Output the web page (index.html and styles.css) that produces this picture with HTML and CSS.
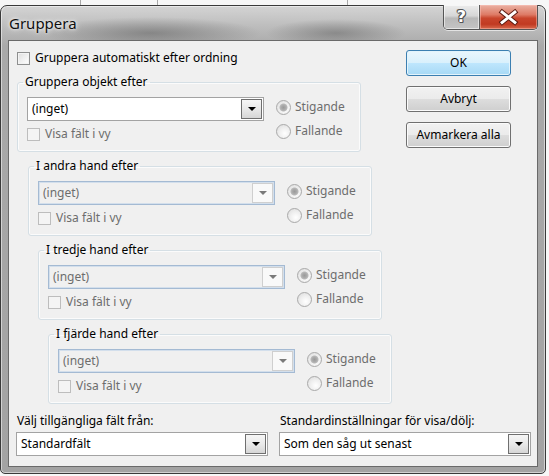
FILE: index.html
```html
<!DOCTYPE html>
<html lang="sv">
<head>
<meta charset="utf-8">
<title>Gruppera</title>
<link rel="stylesheet" href="styles.css">
</head>
<body>
<div class="window">
  <div class="titlebar">
    <span class="title">Gruppera</span>
    <div class="caption-buttons">
      <div class="cap-btn help"><span class="help-glyph">?</span></div>
      <div class="cap-btn close">
        <svg width="58" height="24" viewBox="0 0 58 24">
          <path d="M22.5 7 L35.5 17.5 M35.5 7 L22.5 17.5" stroke="#5b1a10" stroke-width="5" stroke-linecap="square" fill="none"/>
          <path d="M22.5 7 L35.5 17.5 M35.5 7 L22.5 17.5" stroke="#ffffff" stroke-width="3" stroke-linecap="square" fill="none"/>
        </svg>
      </div>
    </div>
  </div>
  <div class="client">
    <div class="main">
      <div class="left">
        <div class="check-row">
          <span class="checkbox"></span><span>Gruppera automatiskt efter ordning</span>
        </div>

        <fieldset class="group">
          <legend>Gruppera objekt efter</legend>
          <div class="gbody">
            <div class="gleft">
              <div class="combo"><span class="combo-text">(inget)</span><span class="combo-btn"><span class="tri"></span></span></div>
              <div class="check-row sub disabled"><span class="checkbox"></span><span>Visa fält i vy</span></div>
            </div>
            <div class="gright disabled">
              <div class="radio-row"><span class="radio checked"></span><span>Stigande</span></div>
              <div class="radio-row"><span class="radio"></span><span>Fallande</span></div>
            </div>
          </div>
        </fieldset>

        <fieldset class="group g2">
          <legend>I andra hand efter</legend>
          <div class="gbody">
            <div class="gleft">
              <div class="combo off"><span class="combo-text">(inget)</span><span class="combo-btn"><span class="tri"></span></span></div>
              <div class="check-row sub disabled"><span class="checkbox"></span><span>Visa fält i vy</span></div>
            </div>
            <div class="gright disabled">
              <div class="radio-row"><span class="radio checked"></span><span>Stigande</span></div>
              <div class="radio-row"><span class="radio"></span><span>Fallande</span></div>
            </div>
          </div>
        </fieldset>

        <fieldset class="group g3">
          <legend>I tredje hand efter</legend>
          <div class="gbody">
            <div class="gleft">
              <div class="combo off"><span class="combo-text">(inget)</span><span class="combo-btn"><span class="tri"></span></span></div>
              <div class="check-row sub disabled"><span class="checkbox"></span><span>Visa fält i vy</span></div>
            </div>
            <div class="gright disabled">
              <div class="radio-row"><span class="radio checked"></span><span>Stigande</span></div>
              <div class="radio-row"><span class="radio"></span><span>Fallande</span></div>
            </div>
          </div>
        </fieldset>

        <fieldset class="group g4">
          <legend>I fjärde hand efter</legend>
          <div class="gbody">
            <div class="gleft">
              <div class="combo off"><span class="combo-text">(inget)</span><span class="combo-btn"><span class="tri"></span></span></div>
              <div class="check-row sub disabled"><span class="checkbox"></span><span>Visa fält i vy</span></div>
            </div>
            <div class="gright disabled">
              <div class="radio-row"><span class="radio checked"></span><span>Stigande</span></div>
              <div class="radio-row"><span class="radio"></span><span>Fallande</span></div>
            </div>
          </div>
        </fieldset>
      </div>

      <div class="buttons">
        <div class="btn default">OK</div>
        <div class="btn">Avbryt</div>
        <div class="btn">Avmarkera alla</div>
      </div>
    </div>

    <div class="bottom">
      <div class="bcol">
        <div class="blabel">Välj tillgängliga fält från:</div>
        <div class="combo wide"><span class="combo-text">Standardfält</span><span class="combo-btn"><span class="tri"></span></span></div>
      </div>
      <div class="bcol">
        <div class="blabel">Standardinställningar för visa/dölj:</div>
        <div class="combo wide"><span class="combo-text">Som den såg ut senast</span><span class="combo-btn"><span class="tri"></span></span></div>
      </div>
    </div>
  </div>
</div>
</body>
</html>
```

FILE: styles.css
```css
* { box-sizing: border-box; }
html, body { margin: 0; padding: 0; }
body {
  width: 549px;
  height: 476px;
  overflow: hidden;
  font-family: "Noto Sans", "DejaVu Sans", sans-serif;
  font-size: 12px;
  line-height: 16px;
  color: #000;
  background-color: #f7f7f7;
  background-image:
    linear-gradient(#a8a8a8, #a8a8a8),
    linear-gradient(#a8a8a8, #a8a8a8),
    linear-gradient(#a8a8a8, #a8a8a8);
  background-size: 1px 6px, 1px 6px, 1px 6px;
  background-position: 80px 0, 157px 0, 347px 0;
  background-repeat: no-repeat;
}

.window {
  width: 546px;
  height: 469px;
  margin-top: 5px;
  border: 1px solid #3a3a3a;
  border-radius: 7px 7px 5px 5px;
  padding: 0 7px 6px 7px;
  display: flex;
  flex-direction: column;
  background:
    radial-gradient(ellipse 110px 16px at 150px 27px, rgba(95, 95, 95, 0.55), rgba(95, 95, 95, 0)),
    radial-gradient(ellipse 70px 14px at 335px 27px, rgba(95, 95, 95, 0.5), rgba(95, 95, 95, 0)),
    linear-gradient(#d4d4d4 0px, #bdbdbd 20px, #a9a9a9 40px, #a3a3a3 100%);
  box-shadow: inset 0 0 0 1px rgba(255, 255, 255, 0.5);
}

.titlebar {
  height: 34px;
  display: flex;
  justify-content: space-between;
  align-items: flex-start;
}
.title {
  padding: 7px 0 0 1px;
  font-size: 15px;
  line-height: 20px;
  color: #101010;
  text-shadow: 0 0 6px rgba(255, 255, 255, 0.9), 0 0 3px rgba(255, 255, 255, 0.9);
}
.caption-buttons {
  display: flex;
  height: 25px;
  margin-top: -1px;
  border: 1px solid #555;
  border-top: none;
  border-radius: 0 0 5px 5px;
  overflow: hidden;
  box-shadow: 0 1px 0 rgba(255, 255, 255, 0.6);
}
.cap-btn {
  height: 100%;
  display: flex;
  align-items: center;
  justify-content: center;
}
.help {
  width: 36px;
  border-right: 1px solid #5c5c5c;
  background: linear-gradient(#ececec 0%, #d6d6d6 45%, #b8b8b8 55%, #c4c4c4 100%);
  box-shadow: inset 0 0 0 1px rgba(255, 255, 255, 0.55);
}
.help-glyph {
  font-family: "DejaVu Sans", sans-serif;
  font-weight: bold;
  font-size: 16px;
  line-height: 16px;
  color: #fff;
  text-shadow: -1px 0 #555, 1px 0 #555, 0 -1px #555, 0 1px #555, 1px 1px #555, -1px -1px #555;
}
.close {
  width: 57px;
  background: linear-gradient(#eab1a3 0%, #de7b66 40%, #c9452c 55%, #c13a22 80%, #d86a4d 100%);
  box-shadow: inset 0 0 0 1px rgba(255, 200, 190, 0.45);
}

.client {
  flex: 1;
  border: 1px solid #6a6a6a;
  background: #f0f0f0;
  padding: 9px 0 0 8px;
  display: flex;
  flex-direction: column;
}

.main {
  display: flex;
  justify-content: space-between;
}
.left {
  display: flex;
  flex-direction: column;
  align-items: flex-start;
}

.check-row {
  display: flex;
  align-items: center;
  gap: 5px;
  height: 16px;
  white-space: nowrap;
}
.checkbox {
  width: 13px;
  height: 13px;
  flex: none;
  border: 1px solid #8e8f8f;
  background: linear-gradient(135deg, #dedede, #f6f6f6 70%, #ffffff);
  box-shadow: inset 0 0 0 1px #f3f3f3;
}
.disabled { color: #6d6d6d; }
.disabled .checkbox {
  border-color: #bdbdbd;
  background: #f4f4f4;
  box-shadow: none;
}

.group {
  width: 344px;
  margin: 8px 0 0 0;
  padding: 7px 0 9px 9px;
  border: 1px solid #d5dfe5;
  border-radius: 3px;
  box-shadow: inset 0 0 0 1px #fbfbfb;
  min-width: 0;
}
.group legend {
  padding: 0 2px;
  margin-left: -4px;
  line-height: 16px;
  white-space: nowrap;
}
.g2 { margin: 6px 0 0 11px; }
.g3 { margin: 6px 0 0 21px; }
.g4 { margin: 6px 0 0 31px; }

.gbody {
  display: flex;
  gap: 12px;
}
.gleft {
  width: 237px;
  display: flex;
  flex-direction: column;
}
.check-row.sub { margin-top: 5px; }
.gright {
  display: flex;
  flex-direction: column;
  gap: 8px;
  margin-top: 2px;
}
.radio-row {
  display: flex;
  align-items: center;
  gap: 4px;
  height: 16px;
}
.radio {
  width: 15px;
  height: 15px;
  border-radius: 50%;
  border: 1px solid #a9a9a9;
  background: radial-gradient(circle at 60% 65%, #ffffff 0%, #eeeeee 50%, #d9d9d9 100%);
  flex: none;
}
.radio.checked {
  background:
    radial-gradient(circle at 50% 50%, #9a9a9a 0px, #a8a8a8 2px, #b8b8b8 3.5px, rgba(184, 184, 184, 0) 4.5px),
    radial-gradient(circle at 60% 65%, #ffffff 0%, #eeeeee 50%, #d9d9d9 100%);
}

.combo {
  height: 24px;
  display: flex;
  align-items: center;
  border: 1px solid #a3a3a3;
  background: #fff;
  padding-left: 4px;
}
.combo-text {
  flex: 1;
  white-space: nowrap;
}
.combo-btn {
  width: 21px;
  height: 20px;
  margin: 0 1px;
  border: 1px solid #6f6f6f;
  background: linear-gradient(#f6f6f6, #e9e9e9 50%, #d6d6d6 100%);
  display: flex;
  align-items: center;
  justify-content: center;
}
.tri {
  width: 0;
  height: 0;
  border-left: 4px solid transparent;
  border-right: 4px solid transparent;
  border-top: 4px solid #000;
}
.combo.off {
  border-color: #a4bad3;
  box-shadow: inset 0 0 0 1px #d3dfec;
  background: #f0f0f0;
  color: #6d6d6d;
}
.combo.off .combo-btn {
  border-color: #cfcfcf;
  background: #f9f9f9;
}
.combo.off .tri { border-top-color: #7a7a7a; }

.buttons {
  display: flex;
  flex-direction: column;
  gap: 10px;
  margin-right: 26px;
}
.btn {
  width: 105px;
  height: 26px;
  border: 1px solid #707070;
  border-radius: 3px;
  display: flex;
  align-items: center;
  justify-content: center;
  background: linear-gradient(#f2f2f2 0%, #ebebeb 50%, #dddddd 51%, #cfcfcf 100%);
  box-shadow: inset 0 0 0 1px #fbfbfb;
}
.btn.default {
  border-color: #3c7fb1;
  background: linear-gradient(#eaf6fd 0%, #d9f0fc 50%, #bee6fd 51%, #a7d9f5 100%);
  box-shadow: inset 0 0 0 1px #e3f4fc;
}

.bottom {
  display: grid;
  grid-template-columns: 252px 252px;
  column-gap: 11px;
  margin: 9px 0 0 -1px;
}
.blabel {
  padding-left: 1px;
  height: 16px;
  white-space: nowrap;
}
.combo.wide { margin-top: 3px; }
```
